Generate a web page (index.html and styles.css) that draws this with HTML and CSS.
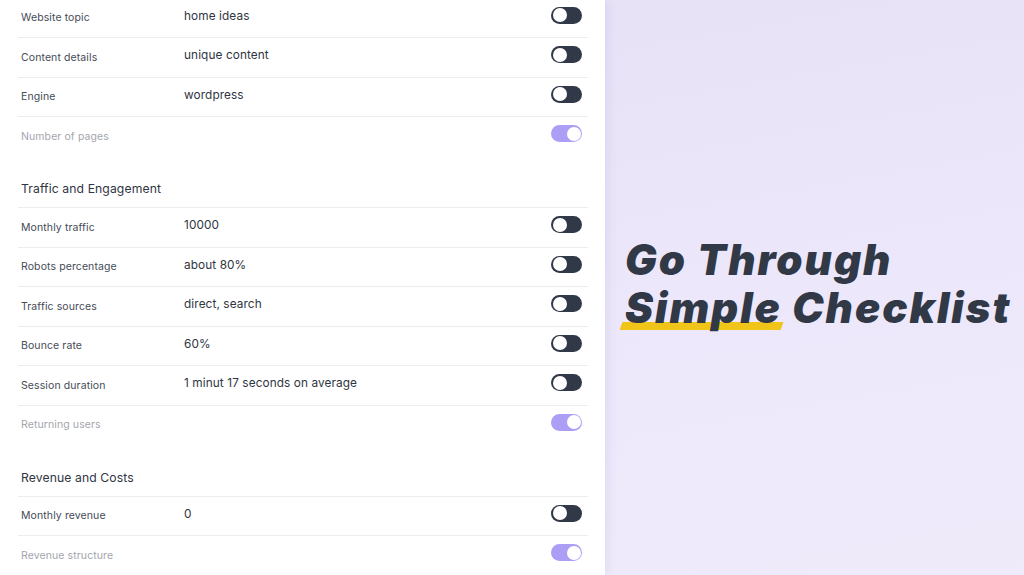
FILE: index.html
```html
<!DOCTYPE html>
<html>
<head>
<meta charset="utf-8">
<link rel="stylesheet" href="styles.css">
</head>
<body>
<div class="page">
  <div class="panel">
    <div class="list">
      <div class="row"><span class="label">Website topic</span><span class="value">home ideas</span><span class="toggle"></span></div>
      <div class="row"><span class="label">Content details</span><span class="value">unique content</span><span class="toggle"></span></div>
      <div class="row"><span class="label">Engine</span><span class="value">wordpress</span><span class="toggle"></span></div>
      <div class="row muted noline"><span class="label">Number of pages</span><span class="value"></span><span class="toggle on"></span></div>
      <div class="section">Traffic and Engagement</div>
      <div class="row"><span class="label">Monthly traffic</span><span class="value">10000</span><span class="toggle"></span></div>
      <div class="row"><span class="label">Robots percentage</span><span class="value">about 80%</span><span class="toggle"></span></div>
      <div class="row"><span class="label">Traffic sources</span><span class="value">direct, search</span><span class="toggle"></span></div>
      <div class="row"><span class="label">Bounce rate</span><span class="value">60%</span><span class="toggle"></span></div>
      <div class="row"><span class="label">Session duration</span><span class="value">1 minut 17 seconds on average</span><span class="toggle"></span></div>
      <div class="row muted noline"><span class="label">Returning users</span><span class="value"></span><span class="toggle on"></span></div>
      <div class="section">Revenue and Costs</div>
      <div class="row"><span class="label">Monthly revenue</span><span class="value">0</span><span class="toggle"></span></div>
      <div class="row muted"><span class="label">Revenue structure</span><span class="value"></span><span class="toggle on"></span></div>
    </div>
  </div>
  <div class="hero">
    <h1 class="title"><span class="line">Go Through</span><span class="line"><span class="mark">Simple</span> Checklist</span></h1>
  </div>
</div>
</body>
</html>
```

FILE: styles.css
```css
* { box-sizing: border-box; }
html, body { margin: 0; padding: 0; }
body {
  width: 1024px;
  height: 575px;
  overflow: hidden;
  font-family: Inter, "Noto Sans", sans-serif;
  background: #ebe6f8;
}
.page {
  display: flex;
  width: 1024px;
  height: 575px;
}
.panel {
  width: 605px;
  flex: none;
  background: #ffffff;
  box-shadow: 2px 0 10px rgba(120, 100, 180, 0.12);
  position: relative;
  z-index: 1;
  overflow: hidden;
}
.list {
  margin: -1.5px 17px 0 18px;
}
.row {
  display: flex;
  align-items: center;
  height: 39.5px;
  border-bottom: 1px solid #ececf0;
  padding: 0 6px 0 3px;
}
.row.noline { border-bottom-color: transparent; }
.label {
  width: 163px;
  flex: none;
  font-size: 10.5px;
  color: #454b57;
  letter-spacing: 0.1px;
}
.value {
  flex: 1;
  font-size: 11.8px;
  color: #2f3542;
  margin-bottom: 4px;
  letter-spacing: 0.1px;
}
.muted .label { color: #a3a6ad; }
.toggle {
  flex: none;
  width: 31px;
  height: 17px;
  border-radius: 9px;
  background: #313948;
  position: relative;
  margin-bottom: 5px;
}
.toggle::after {
  content: "";
  position: absolute;
  top: 1.5px;
  left: 1.5px;
  width: 14px;
  height: 14px;
  border-radius: 50%;
  background: #ffffff;
}
.toggle.on { background: #ab9ef4; }
.toggle.on::after { left: 15.5px; }
.section {
  height: 51.5px;
  border-bottom: 1px solid #ececf0;
  padding: 0 0 11px 3px;
  display: flex;
  align-items: flex-end;
  font-size: 12.2px;
  color: #2f3542;
  letter-spacing: 0.1px;
}
.hero {
  flex: 1;
  background: linear-gradient(170deg, #e8e2f7 0%, #ece7fa 50%, #efebfb 100%);
  padding: 236px 0 0 20px;
}
.title {
  margin: 0;
  font-family: Inter, "Noto Sans", sans-serif;
  font-weight: 900;
  font-style: italic;
  font-size: 42px;
  line-height: 48px;
  color: #313846;
  letter-spacing: 2px;
}
.line { display: block; white-space: nowrap; }
.mark {
  position: relative;
  z-index: 0;
}
.mark::before {
  content: "";
  position: absolute;
  z-index: -1;
  left: -4px;
  right: 0;
  bottom: 3px;
  height: 8px;
  background: #f0c419;
  transform: skewX(-20deg);
}
```
